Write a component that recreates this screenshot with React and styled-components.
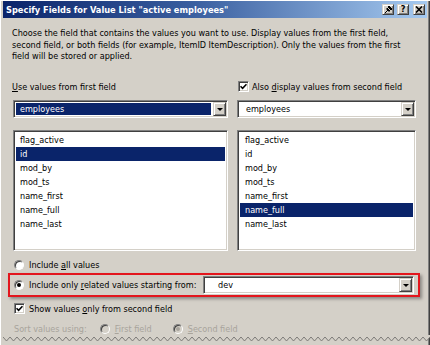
import React from 'react';
import styled, { createGlobalStyle, css } from 'styled-components';

const FACE = '#d4d0c8';
const NAVY = '#0a246a';

const GlobalStyle = createGlobalStyle`
  html, body {
    margin: 0;
    padding: 0;
    background: #fff;
  }
  body {
    font-family: "DejaVu Sans Condensed", "Liberation Sans", Arial, sans-serif;
    font-size: 9px;
    color: #000;
  }
`;

const sunken = css`
  box-sizing: border-box;
  border: 1px solid;
  border-color: #808080 #fff #fff #808080;
  box-shadow: inset 1px 1px #404040, inset -1px -1px ${FACE};
`;

const raised = css`
  box-sizing: border-box;
  background: ${FACE};
  border: 1px solid;
  border-color: ${FACE} #404040 #404040 ${FACE};
  box-shadow: inset 1px 1px #fff, inset -1px -1px #808080;
`;

const Page = styled.div`
  width: 430px;
  height: 345px;
  display: flex;
  flex-direction: column;
  overflow: hidden;
`;

const Frame = styled.div`
  flex: 1;
  display: flex;
  flex-direction: column;
  background: ${FACE};
  padding: 1px 3px 0 3px;
  box-shadow: inset 1px 1px #fff, inset -1px 0 #404040, inset -2px 0 #808080;
`;

const TitleBar = styled.div`
  height: 17px;
  display: flex;
  align-items: center;
  padding: 0 2px 0 3px;
  background: linear-gradient(90deg, ${NAVY} 0%, #3a5fa0 45%, #a6caf0 100%);
`;

const Title = styled.div`
  flex: 1;
  color: #fff;
  font-weight: bold;
  font-size: 9.2px;
  white-space: nowrap;
`;

const CaptionButton = styled.div`
  ${raised};
  width: 12px;
  height: 11px;
  display: flex;
  align-items: center;
  justify-content: center;
  margin-left: ${(p) => p.$gap || 0}px;
  font-weight: bold;
  font-size: 9px;
  line-height: 1;
`;

const Body = styled.div`
  flex: 1;
  display: flex;
  flex-direction: column;
  padding: 10px 11px 0 9px;
`;

const Intro = styled.p`
  margin: 0;
  line-height: 11.5px;
  white-space: nowrap;
`;

const Columns = styled.div`
  display: grid;
  grid-template-columns: 215px 179px;
  column-gap: 9px;
  margin: 18px 0 0 1px;
`;

const Column = styled.div`
  display: flex;
  flex-direction: column;
`;

const Row = styled.div`
  display: flex;
  align-items: center;
  height: 12px;
  white-space: nowrap;
  color: ${(p) => (p.$disabled ? '#a8a49c' : '#000')};
  margin-left: ${(p) => p.$indent || 0}px;
`;

const Label = styled.span`
  margin-left: ${(p) => p.$indent || 0}px;
`;

const RadioSlot = styled.span`
  display: inline-flex;
  margin-left: ${(p) => p.$indent || 0}px;
`;

const Key = styled.span`
  text-decoration: underline;
`;

const Combo = styled.div`
  ${sunken};
  display: flex;
  align-items: center;
  height: 18px;
  padding: 1px;
  background: #fff;
  width: ${(p) => (p.$width ? `${p.$width}px` : 'auto')};
  margin-top: ${(p) => p.$top || 0}px;
  margin-left: ${(p) => (p.$pushRight ? 'auto' : '0')};
`;

const ComboValue = styled.div`
  flex: 1;
  align-self: stretch;
  display: flex;
  align-items: center;
  margin: 1px 2px 1px 1px;
  padding-left: ${(p) => p.$pad || 3}px;
  background: ${(p) => (p.$focused ? NAVY : 'transparent')};
  color: ${(p) => (p.$focused ? '#fff' : '#000')};
`;

const ArrowButton = styled.div`
  ${raised};
  width: 13px;
  align-self: stretch;
  display: flex;
  align-items: center;
  justify-content: center;
  &::after {
    content: '';
    border-left: 3px solid transparent;
    border-right: 3px solid transparent;
    border-top: 3px solid #000;
    margin-top: 1px;
  }
`;

const ListBox = styled.div`
  ${sunken};
  height: 121px;
  margin-top: 12px;
  padding: 2px 2px;
  background: #fff;
`;

const ListItem = styled.div`
  height: 14px;
  line-height: 14px;
  padding-left: ${(p) => p.$pad}px;
  background: ${(p) => (p.$selected ? NAVY : 'transparent')};
  color: ${(p) => (p.$selected ? '#fff' : '#000')};
`;

const Radio = styled.span`
  width: 10px;
  height: 10px;
  box-sizing: border-box;
  border-radius: 50%;
  border: 1px solid;
  border-color: #808080 #fff #fff #808080;
  box-shadow: inset 1px 1px #404040;
  background: ${(p) => (p.$disabled ? FACE : '#fff')};
  display: inline-flex;
  align-items: center;
  justify-content: center;
  flex-shrink: 0;
  &::after {
    content: '';
    display: ${(p) => (p.$checked ? 'block' : 'none')};
    width: 4px;
    height: 4px;
    border-radius: 50%;
    background: ${(p) => (p.$disabled ? '#a8a49c' : '#000')};
  }
`;

const Check = styled.span`
  ${sunken};
  width: 11px;
  height: 11px;
  background: #fff;
  display: inline-flex;
  align-items: center;
  justify-content: center;
  flex-shrink: 0;
`;

const RadioRow = styled(Row)`
  margin-top: ${(p) => p.$top || 0}px;
  padding-left: 2px;
`;

const Highlight = styled.div`
  display: flex;
  align-items: center;
  height: 24px;
  box-sizing: border-box;
  margin: 2px -4px 0 -4px;
  padding: 0 4px 0 4px;
  border: 2px solid #e3161d;
  box-shadow: 2px 2px 3px rgba(0, 0, 0, 0.35);
  white-space: nowrap;
`;

const Torn = styled.svg`
  display: block;
  width: 430px;
  height: 10px;
  flex-shrink: 0;
`;

const CheckMark = () => (
  <svg width="7" height="7" viewBox="0 0 7 7">
    <path d="M0.5 3.2 L2.6 5.3 L6.5 1.2" fill="none" stroke="#000" strokeWidth="1.6" />
  </svg>
);

const PinIcon = () => (
  <svg width="9" height="9" viewBox="0 0 9 9">
    <path d="M1 8 L4 5" stroke="#000" strokeWidth="1" />
    <path d="M3 3 L6 6 M4 2 L7 5 L8 4 L5 1 Z" fill="#000" stroke="#000" strokeWidth="1" />
    <path d="M2.5 3.5 L5.5 6.5" stroke="#000" strokeWidth="1.3" />
  </svg>
);

const CloseIcon = () => (
  <svg width="8" height="7" viewBox="0 0 8 7">
    <path d="M1 0.5 L7 6.5 M7 0.5 L1 6.5" stroke="#000" strokeWidth="1.6" />
  </svg>
);

const TornEdge = () => {
  const pts = [];
  for (let x = 0, i = 0; x <= 432; x += 3.5, i++) {
    pts.push(`${x},${i % 2 === 0 ? 2 : 6}`);
  }
  const line = pts.join(' ');
  return (
    <Torn viewBox="0 0 430 10">
      <polygon points={`0,0 430,0 ${pts.slice().reverse().join(' ')}`} fill={FACE} />
      <polyline points={line} fill="none" stroke="#7d7b78" strokeWidth="1" />
    </Torn>
  );
};

const fields = ['flag_active', 'id', 'mod_by', 'mod_ts', 'name_first', 'name_full', 'name_last'];

const App = () => {
  return (
    <Page>
      <GlobalStyle />
      <Frame>
        <TitleBar>
          <Title>Specify Fields for Value List "active employees"</Title>
          <CaptionButton><PinIcon /></CaptionButton>
          <CaptionButton $gap={3}>?</CaptionButton>
          <CaptionButton $gap={4}><CloseIcon /></CaptionButton>
        </TitleBar>

        <Body>
          <Intro>
            Choose the field that contains the values you want to use. Display values from the first field,
            <br />
            second field, or both fields (for example, ItemID ItemDescription). Only the values from the first
            <br />
            field will be stored or applied.
          </Intro>

          <Columns>
            <Column>
              <Row $indent={-1}><span><Key>U</Key>se values from first field</span></Row>
              <Combo $top={7}>
                <ComboValue $focused $pad={4}>employees</ComboValue>
                <ArrowButton />
              </Combo>
              <ListBox>
                {fields.map((f) => (
                  <ListItem key={f} $pad={4} $selected={f === 'id'}>{f}</ListItem>
                ))}
              </ListBox>
            </Column>
            <Column>
              <Row $indent={1}>
                <Check><CheckMark /></Check>
                <Label $indent={3}>Also <Key>d</Key>isplay values from second field</Label>
              </Row>
              <Combo $top={7}>
                <ComboValue $pad={6}>employees</ComboValue>
                <ArrowButton />
              </Combo>
              <ListBox>
                {fields.map((f) => (
                  <ListItem key={f} $pad={5} $selected={f === 'name_full'}>{f}</ListItem>
                ))}
              </ListBox>
            </Column>
          </Columns>

          <RadioRow $top={8}>
            <Radio />
            <Label $indent={5}>Include <Key>a</Key>ll values</Label>
          </RadioRow>

          <Highlight>
            <Radio $checked />
            <Label $indent={5}>Include only <Key>r</Key>elated values starting from:</Label>
            <Combo $width={211} $pushRight>
              <ComboValue $pad={12}>dev</ComboValue>
              <ArrowButton />
            </Combo>
          </Highlight>

          <RadioRow $top={6}>
            <Check><CheckMark /></Check>
            <Label $indent={4}>Show values <Key>o</Key>nly from second field</Label>
          </RadioRow>

          <RadioRow $top={8} $disabled>
            <Label>Sort values using:</Label>
            <RadioSlot $indent={13}><Radio $disabled /></RadioSlot>
            <Label $indent={5}><Key>F</Key>irst field</Label>
            <RadioSlot $indent={21}><Radio $disabled $checked /></RadioSlot>
            <Label $indent={5}><Key>S</Key>econd field</Label>
          </RadioRow>
        </Body>
        <TornEdge />
      </Frame>
    </Page>
  );
};

export default App;
